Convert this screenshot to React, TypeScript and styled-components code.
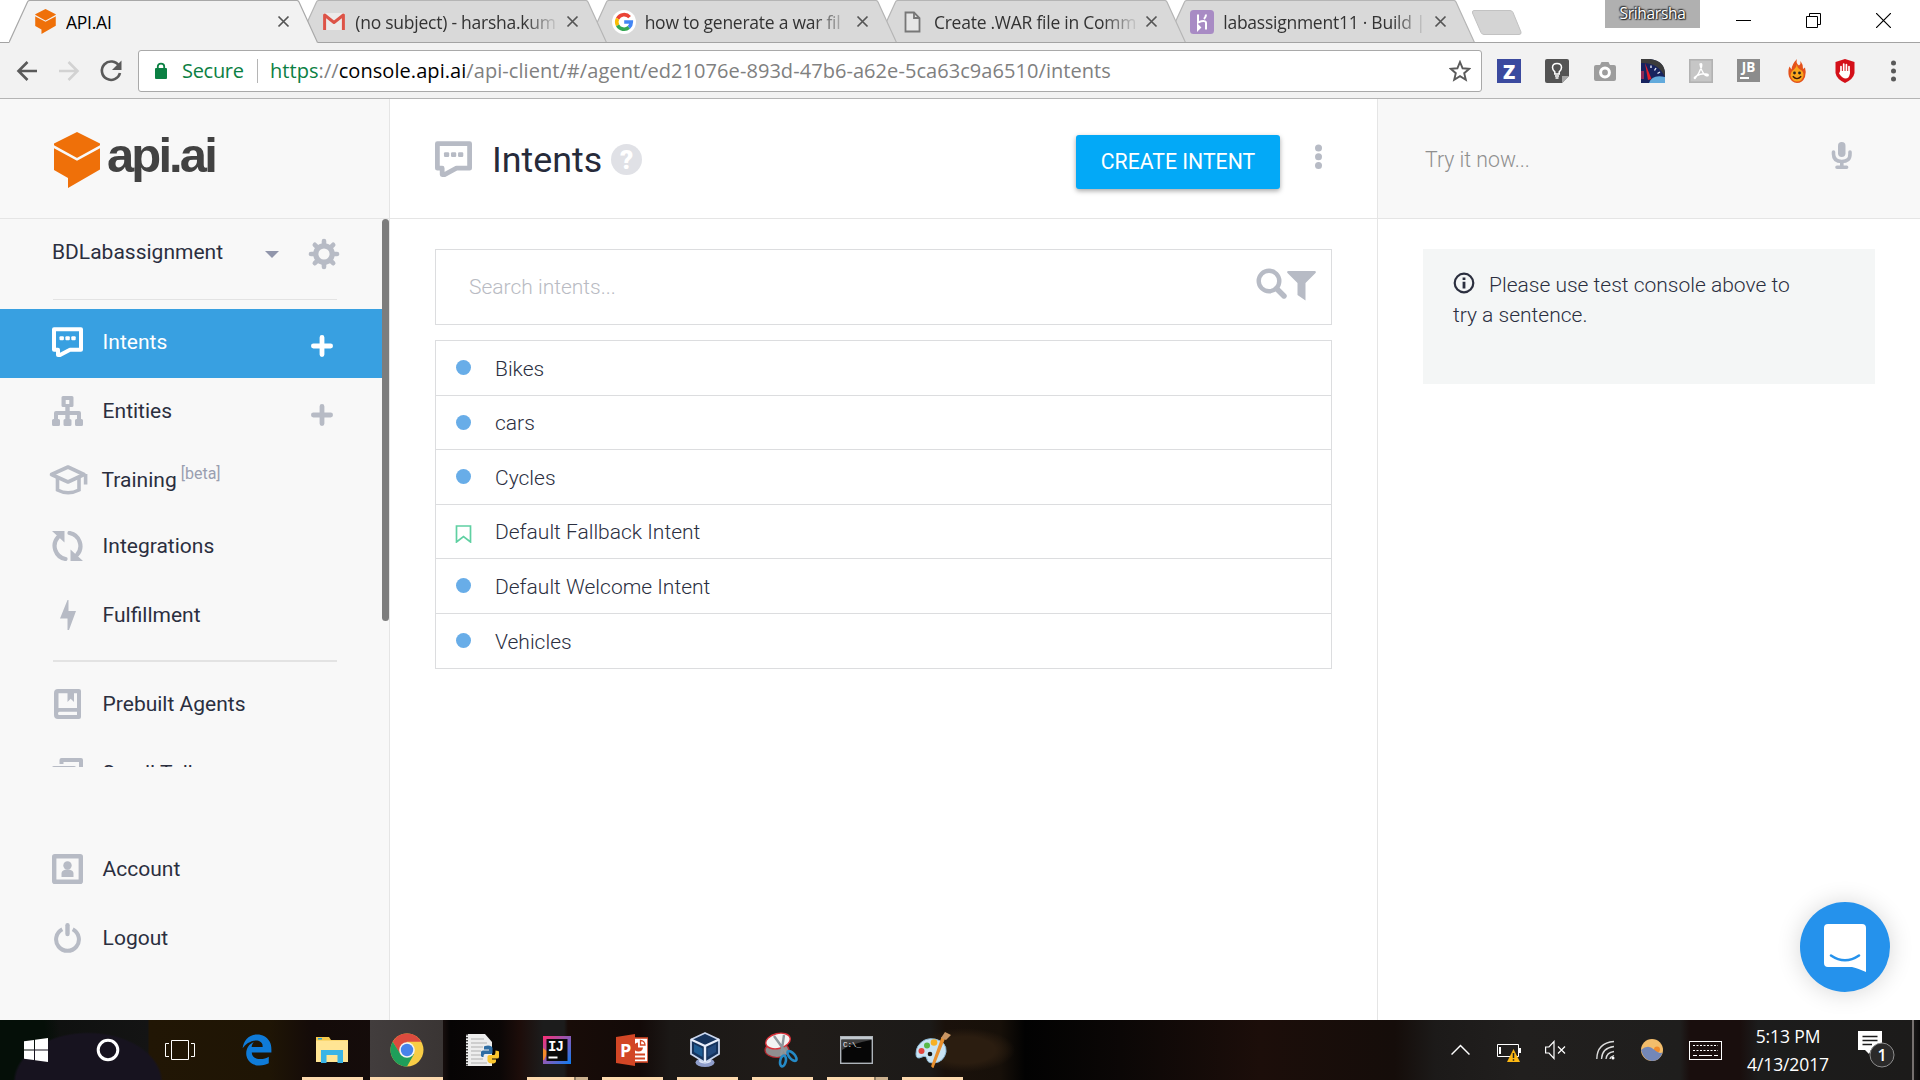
import React from 'react';
import styled, { createGlobalStyle, css } from 'styled-components';

const muted = '#b7bbc5';
const ink = '#2b2f3f';
const uiFont = '"Open Sans", "Noto Sans", sans-serif';
const appFont = 'Roboto, "Liberation Sans", sans-serif';

const GlobalStyle = createGlobalStyle`
  html, body { margin: 0; padding: 0; background: #fff; overflow: hidden; }
  *, *::before, *::after { box-sizing: border-box; }
  svg { display: block; flex: none; }
`;

const Screen = styled.div`
  width: 1920px;
  height: 1080px;
  display: flex;
  flex-direction: column;
  background: #fff;
  font-family: ${appFont};
  color: ${ink};
`;

/* ---------- browser chrome ---------- */

const TabStrip = styled.div`
  height: 43px;
  flex: none;
  display: flex;
  padding-left: 9px;
  background: #fff;
  box-shadow: inset 0 -1px 0 #a3a3a3;
`;

const TabBox = styled.div<{ $order: number }>`
  position: relative;
  z-index: ${(p) => p.$order};
  width: 309px;
  height: 43px;
  margin-right: -19.7px;
  padding: 0 28px 0 24px;
  display: flex;
  align-items: center;
  flex: none;
`;

const TabShape = styled.svg`
  position: absolute;
  inset: 0;
`;

const TabIcon = styled.div`
  position: relative;
  width: 24px;
  height: 26px;
  display: flex;
  align-items: center;
  justify-content: center;
  flex: none;
`;

const TabTitle = styled.div<{ $fade: boolean }>`
  position: relative;
  width: 207px;
  margin-left: 9px;
  overflow: hidden;
  white-space: nowrap;
  font: 400 17.5px/28px ${uiFont};
  letter-spacing: -0.25px;
  color: ${(p) => (p.$fade ? '#333' : '#000')};
  ${(p) =>
    p.$fade &&
    css`
      mask-image: linear-gradient(90deg, #000 82%, rgba(0, 0, 0, 0.15) 97%);
    `}
`;

const TabClose = styled.svg`
  position: relative;
  margin-left: 5px;
`;

const NewTab = styled.svg`
  margin: 9px 0 0 15px;
`;

const WindowControls = styled.div`
  margin-left: auto;
  display: flex;
  align-items: flex-start;
  padding-right: 2px;
`;

const ProfileBadge = styled.div`
  width: 95px;
  height: 28px;
  margin-right: 8px;
  background: #b0b0b0;
  color: #fff;
  font: 400 15.5px/27px ${uiFont};
  letter-spacing: -0.3px;
  text-align: center;
  text-shadow: 0 0 2px #222, 0 0 2px #222, 1px 1px 1px #333, -1px -1px 1px #444;
`;

const WindowButton = styled.div`
  width: 70px;
  height: 41px;
  display: flex;
  align-items: center;
  justify-content: center;
`;

const Toolbar = styled.div`
  height: 56px;
  flex: none;
  display: flex;
  align-items: center;
  background: #f2f2f2;
  border-bottom: 1px solid #b4b4b4;
`;

const NavButtons = styled.div`
  width: 138px;
  height: 41px;
  display: flex;
  align-items: center;
  padding-left: 15px;
  gap: 18px;
  flex: none;
`;

const Omnibox = styled.div`
  width: 1344px;
  height: 42px;
  display: flex;
  align-items: center;
  background: #fff;
  border: 1px solid #a9a9a9;
  border-radius: 3px;
  padding: 0 10px 0 15px;
  font: 400 20px/38px ${uiFont};
  white-space: nowrap;
  flex: none;
`;

const Secure = styled.span`
  width: 75px;
  margin-left: 14px;
  color: #0b8043;
  letter-spacing: -0.3px;
`;

const OmniDivider = styled.i`
  width: 1px;
  height: 24px;
  background: #b5b5b5;
  margin-right: 12px;
`;

const Url = styled.span`
  flex: 1;
  color: #808080;
  letter-spacing: 0.06px;
  b { font-weight: 400; color: #000; }
  em { font-style: normal; color: #0b8043; }
`;

const Extensions = styled.div`
  display: flex;
  align-items: center;
  padding-left: 15px;
`;

const ExtensionSlot = styled.div<{ $w?: number }>`
  width: ${(p) => p.$w ?? 48}px;
  display: flex;
  justify-content: flex-start;
`;

/* ---------- page ---------- */

const Page = styled.div`
  height: 921px;
  flex: none;
  display: flex;
`;

const Sidebar = styled.aside`
  width: 390px;
  flex: none;
  display: flex;
  flex-direction: column;
  background: #f8f8f8;
  border-right: 1px solid #e5e5e5;
`;

const Brand = styled.div`
  height: 120px;
  flex: none;
  display: flex;
  padding: 33px 0 0 54px;
  border-bottom: 1px solid #e5e5e5;
`;

const BrandName = styled.div`
  margin: -5px 0 0 7px;
  font: 700 49px/56px "Liberation Sans", Arial, sans-serif;
  letter-spacing: -2.9px;
  color: #424242;
`;

const ScrollArea = styled.div`
  height: 548px;
  flex: none;
  display: flex;
  overflow: hidden;
`;

const ScrollThumb = styled.div`
  width: 7px;
  height: 402px;
  border-radius: 4px;
  background: #7d7d7d;
`;

const Nav = styled.nav`
  width: 382px;
  flex: none;
`;

const AgentRow = styled.div`
  height: 80px;
  display: flex;
  padding-left: 52px;
`;

const AgentName = styled.div`
  width: 213px;
  font-size: 21px;
  line-height: 66px;
`;

const Caret = styled.svg`
  margin-top: 32px;
`;

const Gear = styled.svg`
  margin: 19px 0 0 29px;
`;

const Divider = styled.hr<{ $thick?: boolean }>`
  width: 284px;
  height: ${(p) => (p.$thick ? 2 : 1)}px;
  margin: ${(p) => (p.$thick ? '9px 0 9px 53px' : '0 0 9px 53px')};
  border: 0;
  background: #e3e3e3;
`;

const NavItem = styled.div<{ $active?: boolean; $h?: number }>`
  height: ${(p) => p.$h ?? 69}px;
  display: flex;
  padding-left: 47px;
  color: ${(p) => (p.$active ? '#fff' : ink)};
  background: ${(p) => (p.$active ? '#38a0e1' : 'transparent')};
`;

const NavIcon = styled.div<{ $active?: boolean }>`
  width: 41px;
  height: 30px;
  margin-top: 18px;
  display: flex;
  justify-content: center;
  color: ${(p) => (p.$active ? '#fff' : muted)};
`;

const NavLabel = styled.div<{ $shift?: number }>`
  width: 209px;
  margin-left: ${(p) => 14.6 + (p.$shift ?? 0)}px;
  margin-right: ${(p) => -0.6 - (p.$shift ?? 0)}px;
  font-size: 21px;
  line-height: 66px;
  white-space: nowrap;
`;

const Beta = styled.sup`
  font-size: 16px;
  line-height: 0;
  vertical-align: 8px;
  margin-left: 4px;
  color: #9a9fb0;
`;

const AddMark = styled.div<{ $active?: boolean }>`
  padding-top: 25.5px;
  color: ${(p) => (p.$active ? '#fff' : muted)};
`;

const AccountNav = styled.nav`
  padding-top: 69px;
`;

const Main = styled.main`
  width: 987px;
  flex: none;
`;

const MainHeader = styled.header`
  height: 120px;
  display: flex;
  align-items: flex-start;
  padding-left: 45px;
  border-bottom: 1px solid #e5e5e5;
`;

const HeaderIcon = styled.div`
  margin-top: 42px;
  color: ${muted};
`;

const Title = styled.h1`
  margin: 41px 9px 0 20px;
  font-size: 35.8px;
  font-weight: 400;
  line-height: 41px;
  color: #262a3a;
`;

const HelpBadge = styled.div`
  width: 31px;
  height: 31px;
  margin-top: 45px;
  border-radius: 50%;
  background: #e0e1e6;
  color: #fff;
  font-weight: 900;
  font-size: 26px;
  line-height: 32px;
  text-align: center;
`;

const CreateButton = styled.button`
  width: 204px;
  height: 54px;
  margin: 36px 34px 0 auto;
  padding: 0;
  border: 0;
  border-radius: 3px;
  background: #03a9f7;
  box-shadow: 0 2px 5px rgba(0, 0, 0, 0.35);
  color: #fff;
  font: 400 21.25px/54px ${appFont};
`;

const HeaderMenu = styled.svg`
  margin: 45px 54px 0 0;
`;

const MainBody = styled.div`
  padding: 30px 45px 0;
`;

const SearchBox = styled.div`
  height: 76px;
  display: flex;
  align-items: flex-start;
  border: 1px solid #dcdddf;
  padding: 0 15px 0 33px;
  color: #b9bbc3;
`;

const Placeholder = styled.span`
  flex: 1;
  font-size: 21px;
  font-weight: 300;
  line-height: 74px;
`;

const SearchIcon = styled.svg`
  margin-top: 17px;
`;

const FilterIcon = styled.svg`
  margin-top: 21px;
`;

const IntentList = styled.ul`
  list-style: none;
  margin: 15px 0 0;
  padding: 0;
  border: 1px solid #dcdddf;
`;

const IntentRow = styled.li`
  height: 54.5px;
  display: flex;
  align-items: center;
  padding-left: 19px;
  font-size: 21px;
  font-weight: 300;
  &:not(:last-child) { border-bottom: 1px solid #dcdddf; }
`;

const IntentMark = styled.div`
  width: 17px;
  margin-right: 23px;
  display: flex;
  justify-content: center;
`;

const IntentName = styled.span`
  padding-top: 1.5px;
  line-height: 30px;
`;

const Dot = styled.i`
  width: 15px;
  height: 15px;
  border-radius: 50%;
  background: #68ade8;
`;

const Console = styled.aside`
  position: relative;
  width: 543px;
  flex: none;
  border-left: 1px solid #e5e5e5;
`;

const ConsoleHeader = styled.div`
  height: 120px;
  display: flex;
  align-items: flex-start;
  justify-content: space-between;
  padding: 0 67px 0 47px;
  background: #f8f8f8;
  border-bottom: 1px solid #e5e5e5;
  font-size: 21.25px;
  font-weight: 300;
  line-height: 122px;
  color: #8f8f8f;
`;

const Mic = styled.svg`
  margin-top: 43px;
`;

const Hint = styled.div`
  width: 452px;
  height: 135px;
  margin: 30px 0 0 45px;
  padding: 21px 70px 0 30px;
  background: #f4f6f6;
  font-size: 21px;
  font-weight: 300;
  line-height: 30.4px;
`;

const HintIcon = styled.svg`
  display: inline-block;
  vertical-align: -2px;
  margin-right: 14px;
`;

const Messenger = styled.div`
  position: absolute;
  left: 422px;
  top: 803px;
  width: 90px;
  height: 90px;
  border-radius: 50%;
  background: #2592ec;
  box-shadow: 0 1px 24px rgba(0, 0, 0, 0.16);
`;

/* ---------- taskbar ---------- */

const Taskbar = styled.div`
  height: 60px;
  flex: none;
  display: flex;
  background:
    radial-gradient(ellipse 75px 50px at 88px 62px, #17131f 0 96%, transparent 100%),
    radial-gradient(ellipse 60px 90px at 0 20px, #050f08 0 75%, transparent 100%),
    radial-gradient(ellipse 50px 22px at 965px 30px, #2b1d10 0 60%, transparent 100%),
    linear-gradient(90deg, #0c0f0d 0, #141414 148px, #211605 149px, #1f1505 270px, #140b09 312px,
      #150d0c 444px, #060404 450px, #0b0706 500px, #1d0d0a 520px, #1c1c1c 543px, #1c1c1c 564px,
      #180c08 568px, #130a08 640px, #1b1816 670px, #201c19 800px, #1c1a18 930px, #1a110b 945px,
      #171009 1000px, #020202 1025px, #0b0706 1120px, #1c0e0a 1260px, #150d0a 1395px, #1c1a19 1435px,
      #211f1e 1520px, #1f1e1d 1680px, #190e0d 1690px, #190e0d 1740px, #1c1c1c 1758px, #1c1b1a 1912px,
      #0d0c0c 1920px);
`;

const Task = styled.div<{ $w?: number; $active?: boolean }>`
  width: ${(p) => p.$w ?? 75}px;
  height: 60px;
  display: flex;
  flex-direction: column;
  align-items: center;
  background: ${(p) => (p.$active ? 'linear-gradient(90deg, #423d3d, #3a3534)' : 'transparent')};
  flex: none;
`;

const TaskArt = styled.div<{ $nudge?: number }>`
  height: 57px;
  padding: 3px ${(p) => p.$nudge ?? 0}px 0 0;
  display: flex;
  align-items: center;
`;

const TaskLine = styled.div<{ $w: number; $stacked?: boolean }>`
  width: ${(p) => p.$w}px;
  height: 3px;
  background: ${(p) =>
    p.$stacked ? 'linear-gradient(90deg, #fcd9ae 47px, #8e7c65 47px 49px, #cbb08e 49px)' : '#fcd9ae'};
`;

const Tray = styled.div`
  margin-left: auto;
  display: flex;
  align-items: center;
`;

const TraySlot = styled.div<{ $w: number }>`
  width: ${(p) => p.$w}px;
  flex: none;
`;

const Clock = styled.div`
  width: 100px;
  text-align: center;
  color: #fff;
  font: 400 17.500px/28px ${uiFont};
  letter-spacing: -0.1px;
`;

const ShowDesktop = styled.div`
  width: 8px;
  height: 60px;
  border-left: 2px solid #75706e;
`;

/* ---------- drawings ---------- */

const Cube = ({ w, h, gap }: { w: number; h: number; gap: string }) => (
  <svg width={w} height={h} viewBox="0 0 46 56">
    <path d="M23 0 46 11.5V37.500L14 56V46L0 38V11.5Z" fill="#ef7009" />
    <path d="M-1 14.300 23 27.300 47 14.300" fill="none" stroke={gap} strokeWidth="2.6" />
  </svg>
);

const SpeechIcon = ({ w, h }: { w: number; h: number }) => (
  <svg width={w} height={h} viewBox="0 0 31 30">
    <path
      d="M2 2.200H29V22.700H18L8 28H6V22.700H2Z"
      fill="none"
      stroke="currentColor"
      strokeWidth="4"
      strokeLinejoin="round"
    />
    <g fill="currentColor">
      <rect x="7.500" y="9.300" width="4.400" height="4" rx="1" />
      <rect x="13.400" y="9.300" width="4.400" height="4" rx="1" />
      <rect x="19.300" y="9.300" width="4.400" height="4" rx="1" />
    </g>
  </svg>
);

const EntitiesIcon = () => (
  <svg width="31" height="30" viewBox="0 0 31 30" fill="currentColor">
    <path
      fillRule="evenodd"
      d="M11 0h9q1.500 0 1.500 1.500v8q0 1.500-1.500 1.500h-2.300v4H27q2 0 2 2v6h.5q1.500 0 1.500 1.500v4q0 1.500-1.500 1.500h-5q-1.500 0-1.500-1.500v-4q0-1.500 1.500-1.500h.5v-4H17.700v4h.3q1.500 0 1.500 1.500v4q0 1.500-1.500 1.500h-5q-1.500 0-1.500-1.500v-4q0-1.500 1.500-1.500h.3v-4H6v4h.5q1.500 0 1.500 1.500v4q0 1.500-1.500 1.500h-5q-1.500 0-1.500-1.500v-4q0-1.500 1.500-1.500H2v-6q0-2 2-2h9.300v-4H11q-1.500 0-1.500-1.500v-8Q9.500 0 11 0ZM13.700 4v4h3.600V4Z"
    />
  </svg>
);

const TrainingIcon = () => (
  <svg width="40" height="30" viewBox="0 0 40 30" fill="none" stroke="currentColor" strokeWidth="3.600">
    <path d="M3.500 9.500 20 2 36 9.500 20 17Z" strokeLinejoin="round" />
    <path d="M9.500 13v12Q20 30.500 31 25V13" />
    <path d="M37.600 9v10.500" />
  </svg>
);

const IntegrationsIcon = () => (
  <svg width="31" height="30" viewBox="0 0 31 30">
    <g fill="none" stroke="currentColor" strokeWidth="4.200" strokeLinecap="round">
      <path d="M13.500 28A13.200 13.200 0 0 1 6 6.200" />
      <path d="M17.500 2A13.200 13.200 0 0 1 25 23.800" />
    </g>
    <path d="M0 0H12.500V11.500Z M31 30H18.500V18.500Z" fill="currentColor" />
  </svg>
);

const BoltIcon = () => (
  <svg width="16" height="30" viewBox="0 0 16 30" fill="currentColor">
    <path d="M7.500 0H8.500V11H16L9 30H7.500V18.500H0Z" />
  </svg>
);

const BookIcon = () => (
  <svg width="27" height="30" viewBox="0 0 27 30">
    <path
      fill="currentColor"
      fillRule="evenodd"
      d="M4 0H25Q27 0 27 2V28Q27 30 25 30H4Q0 30 0 26V4Q0 0 4 0ZM4.500 4.300V19H23V4.300H20V13L16.700 9.800 13.500 13V4.300ZM5.500 22.800Q4 22.800 4 24.500T5.500 26H23V22.800Z"
    />
  </svg>
);

const TalkIcon = () => (
  <svg width="31" height="30" viewBox="0 0 31 30" fill="none" stroke="currentColor" strokeWidth="4">
    <path d="M9.500 6V2H29V17H25" strokeLinejoin="round" />
    <path d="M2 10H22V24H10L2 28Z" strokeLinejoin="round" />
  </svg>
);

const AccountIcon = () => (
  <svg width="31" height="30" viewBox="0 0 31 30">
    <rect x="2.200" y="2.200" width="26.600" height="25.600" rx=".6" fill="none" stroke="currentColor" strokeWidth="4.400" />
    <circle cx="15.500" cy="11.500" r="4.200" fill="currentColor" />
    <path d="M9.500 23V19Q10 15.500 15.500 15.500T21.500 19V23Z" fill="currentColor" />
  </svg>
);

const PowerIcon = () => (
  <svg width="27" height="30" viewBox="0 0 27 30" fill="none" stroke="currentColor" strokeWidth="4">
    <path d="M8.300 6.300A11.400 11.400 0 1 0 18.700 6.300" />
    <path d="M13.500 2.200V11" strokeWidth="4.400" strokeLinecap="round" />
  </svg>
);

const PlusIcon = () => (
  <svg width="22" height="22" viewBox="0 0 22 22" stroke="currentColor" strokeWidth="4.800" strokeLinecap="round">
    <path d="M2.400 11H19.600M11 2.400V19.600" />
  </svg>
);

const GearIcon = () => (
  <Gear width="32" height="32" viewBox="-16 -16 32 32">
    <g stroke={muted} strokeWidth="4.600" strokeLinecap="round">
      {[0, 45, 90, 135, 180, 225, 270, 315].map((a) => (
        <path key={a} d="M0-9V-13" transform={`rotate(${a})`} />
      ))}
    </g>
    <circle r="8.200" fill="none" stroke={muted} strokeWidth="5.200" />
  </Gear>
);

const tabPath = 'M0 42.500 18.500 2Q19.300.5 21 .5H287.500Q289.200.5 290 2L308.500 42.500';

const Tab = ({
  title,
  icon,
  order,
  active,
}: {
  title: string;
  icon: React.ReactNode;
  order: number;
  active?: boolean;
}) => (
  <TabBox $order={order}>
    <TabShape width="309" height="43" viewBox="0 0 309 43">
      <path d={active ? tabPath + 'V43H0Z' : tabPath + 'Z'} fill={active ? '#f2f2f2' : '#d9d9d9'} />
      <path d={tabPath} fill="none" stroke={active ? '#a8a8a8' : '#b5b5b5'} strokeWidth="1.200" />
      {!active && <path d="M0 42.500H309" stroke="#a3a3a3" />}
    </TabShape>
    <TabIcon>{icon}</TabIcon>
    <TabTitle $fade={!active}>{title}</TabTitle>
    <TabClose width="13" height="13" viewBox="0 0 13 13" stroke="#555" strokeWidth="1.700">
      <path d="M1.500 1.500 11.500 11.500M11.500 1.500 1.500 11.500" />
    </TabClose>
  </TabBox>
);

const GmailIcon = () => (
  <svg width="22" height="17" viewBox="0 0 22 17">
    <rect width="22" height="17" rx="1.500" fill="#eceaea" />
    <path d="M1.600 17V2L11 9.500 20.400 2V17" fill="none" stroke="#dd5347" strokeWidth="3" strokeLinejoin="round" />
  </svg>
);

const GoogleIcon = () => (
  <svg width="24" height="24" viewBox="0 0 24 24">
    <circle cx="12" cy="12" r="12" fill="#fff" />
    <g fill="none" strokeWidth="3.600">
      <path d="M17.600 7.100A7.300 7.300 0 0 0 5.600 8.600" stroke="#ea4335" />
      <path d="M5.600 8.600A7.300 7.300 0 0 0 5.600 15.400" stroke="#fbbc05" />
      <path d="M5.600 15.400A7.300 7.300 0 0 0 16.900 17.400" stroke="#34a853" />
      <path d="M16.900 17.400A7.300 7.300 0 0 0 19.300 12H12.200" stroke="#4285f4" />
    </g>
  </svg>
);

const FileIcon = () => (
  <svg width="17" height="22" viewBox="0 0 17 22" fill="#e6e6e6" stroke="#777" strokeWidth="1.800">
    <path d="M1.500 1.500H10L15.500 7V20.500H1.500Z" />
    <path d="M10 1.500V7H15.500" fill="none" />
  </svg>
);

const HerokuIcon = () => (
  <svg width="24" height="24" viewBox="0 0 24 24">
    <rect width="24" height="24" rx="3.500" fill="#a88bc4" />
    <path d="M8 4.500V12.500Q16 9.500 16 13V19.500M16 4.500Q16 7 14 9M8 15.500V19.500L10 17.500Z" fill="none" stroke="#fff" strokeWidth="2" />
  </svg>
);

const extensions: React.ReactNode[] = [
  <svg width="24" height="24" viewBox="0 0 24 24">
    <rect width="24" height="24" fill="#3b4a9f" />
    <text x="12" y="19.500" textAnchor="middle" fontFamily="Open Sans, sans-serif" fontWeight="800" fontSize="20" fill="#fff">Z</text>
  </svg>,
  <svg width="24" height="24" viewBox="0 0 24 24">
    <path d="M2 0H22Q24 0 24 2V17L17 24H2Q0 24 0 22V2Q0 0 2 0Z" fill="#545454" />
    <path d="M24 17H17V24Z" fill="#a5a5a5" />
    <path d="M9.800 15V12.800Q7.500 11 7.500 8.500 7.500 4.500 12 4.500T16.500 8.500Q16.500 11 14.200 12.800V15Z" fill="none" stroke="#fff" strokeWidth="1.500" />
    <path d="M10 17H14M10.500 19H13.500" stroke="#fff" strokeWidth="1.500" />
  </svg>,
  <svg width="24" height="24" viewBox="0 0 24 24">
    <path d="M3 6H7L8.500 3H15.500L17 6H21Q23 6 23 8V20Q23 22 21 22H3Q1 22 1 20V8Q1 6 3 6Z" fill="#9d9d9d" />
    <circle cx="12" cy="13.500" r="4.400" fill="#9d9d9d" stroke="#fff" strokeWidth="3" />
  </svg>,
  <svg width="24" height="24" viewBox="0 0 24 24">
    <path d="M0 0H9Q24 2 24 16V24H0Z" fill="#17235f" />
    <path d="M0 0H9Q24 2 24 15V18Q17 3 0 4Z" fill="#3c3c3c" />
    <path d="M8 24Q11 15 24 18V24Z" fill="#62aadc" />
    <path d="M10 6.500V9M15 9 13.500 11.500M19 13 16.500 14.500" stroke="#dfe6f5" strokeWidth="1.400" />
    <path d="M4 4 10.500 20 7 21Z" fill="#e3202b" />
    <path d="M0 12H3V20H0Z" fill="#8c2a58" />
  </svg>,
  <svg width="24" height="24" viewBox="0 0 24 24">
    <rect x=".8" y=".8" width="22.400" height="22.400" fill="#c6c6c6" stroke="#b2b2b2" strokeWidth="1.600" />
    <path d="M11 5Q13.500 3.500 12.500 8 10.500 14 6 19.500 4 19 8 16.500 14 13.500 19 15.500 20 18 16 16 12 12 11 5Z" fill="none" stroke="#fff" strokeWidth="1.400" />
  </svg>,
  <svg width="23" height="23" viewBox="0 0 23 23">
    <rect width="23" height="23" fill="#8c8c8c" />
    <text x="11.500" y="13" textAnchor="middle" fontFamily="Open Sans, sans-serif" fontWeight="700" fontSize="13.500" fill="#fff">JB</text>
    <rect x="3" y="18" width="9" height="2" fill="#fff" />
  </svg>,
  <svg width="24" height="24" viewBox="0 0 24 24">
    <path d="M12 0Q10.500 4 14 6.500 16 5 15.500 2 18.500 6 18 10L20 8.500Q21.500 13 20 18 17.500 24 12 24T4 17.500Q2.500 12 4.500 7.500L6.500 10.500Q7 5 12 0Z" fill="#e4521b" />
    <path d="M12 5Q12 9 15 10.500 19 12 18.500 17 17 22.500 12 22.500T5.500 16.500Q6 12 9 10.500 11.500 8.500 12 5Z" fill="#f9a61e" />
    <circle cx="9.500" cy="14" r="1.400" fill="#222" />
    <circle cx="14.500" cy="14" r="1.400" fill="#222" />
    <path d="M7.800 17.300Q12 22 16.200 17.300" fill="none" stroke="#3a1608" strokeWidth="1.400" />
  </svg>,
  <svg width="24" height="24" viewBox="0 0 24 24">
    <path d="M12 0 21.500 3V14Q20.500 20 12 24 3.500 20 2.500 14V3Z" fill="#d41019" />
    <path d="M8 13V7.500M10.700 12V5M13.400 12V5.500M16 14V7.500" stroke="#fff" strokeWidth="1.700" strokeLinecap="round" />
    <path d="M7.200 12H16.800V15Q16 19.500 12.500 19.500 9.500 19.500 6 14.500Z" fill="#fff" />
  </svg>,
];

const tasks: { art: React.ReactNode; line?: boolean; stacked?: boolean; active?: boolean; nudge?: number }[] = [
  {
    nudge: 2,
    art: (
      <svg width="32" height="32" viewBox="12 0 488 512">
        <path
          fill="#0f7bd8"
          d="M486.286 243.671c0-44.032-7.754-84.465-28.801-122.405C416.498 47.879 343.912 8.001 258.893 8.001 118.962 7.724 40.617 113.214 26.056 227.679c42.429-61.312 117.073-121.376 220.375-124.966 0 0 109.666 0 99.419 104.957H169.997c6.369-37.386 18.554-58.986 34.339-78.926-75.049 34.900-121.850 96.096-120.742 188.315.83 71.448 50.124 144.836 120.743 171.976 83.357 31.843 192.776 7.200 240.132-21.324V363.307c-80.864 56.494-270.871 60.924-272.255-67.572h314.073z"
        />
      </svg>
    ),
  },
  {
    line: true,
    nudge: 2,
    art: (
      <svg width="32" height="28" viewBox="0 0 32 28">
        <path d="M0 1H13L15 4H32V26H0Z" fill="#f5c84c" />
        <rect y="4.500" width="32" height="21.500" fill="#ffe594" />
        <rect x="2" y="2" width="4" height="1.500" fill="#2a9fd6" />
        <path d="M5 14H27V27H21.500V19H10.500V27H5Z" fill="#39b4e6" />
      </svg>
    ),
  },
  {
    line: true,
    active: true,
    art: (
      <svg width="34" height="34" viewBox="-17 -17 34 34">
        <circle r="16.500" fill="#f8cd46" />
        <path d="M-14.300-8.250A16.500 16.500 0 0 1 14.300-8.250H0L-7 4Z" fill="#dc4b3e" />
        <path d="M-14.300-8.250A16.500 16.500 0 0 0 0 16.500L7.100 4.100-6 5Z" fill="#1f9e5a" />
        <circle r="7.800" fill="#f3f3f3" />
        <circle r="6.200" fill="#4683ea" />
      </svg>
    ),
  },
  {
    art: (
      <svg width="34" height="34" viewBox="0 0 34 34">
        <path d="M1 1H20L27 9V33H1Z" fill="#ededed" />
        <path d="M2 1V33" stroke="#444" strokeWidth="2" strokeDasharray="1.500 1.500" />
        <path d="M6 6H19M6 10H22M6 14H18M6 18H16M6 22H17M6 26H18M6 30H22" stroke="#c4c4c4" strokeWidth="1.300" />
        <path d="M16 23V19Q16 17.500 18 17.500H24V16.500H19V14Q19 12.500 23 12.500T27.500 15V19.500Q27.500 21 25.500 21H20Q18.500 21 18.500 24H17Z" fill="#2f6da3" />
        <path d="M34 19V24Q34 25.500 32 25.500H27V26.500H31V28.500Q30.500 30.500 27 30.500T22.500 28V23.500Q22.500 22 24.500 22H29Q30.500 22 30.500 17.500 34 17.500 34 19Z" fill="#fbc62f" />
      </svg>
    ),
  },
  {
    line: true,
    stacked: true,
    nudge: 2,
    art: (
      <svg width="28" height="28" viewBox="0 0 28 28">
        <defs>
          <linearGradient id="ij" x1="0" y1="0" x2="1" y2="1">
            <stop offset="0" stopColor="#fc2d72" />
            <stop offset=".5" stopColor="#8a5bb8" />
            <stop offset="1" stopColor="#0a7df2" />
          </linearGradient>
        </defs>
        <rect width="28" height="28" fill="url(#ij)" />
        <path d="M0 12 5 16 1 24H0Z" fill="#f58a2b" />
        <rect x="3.500" y="3" width="21" height="22" fill="#0a0a0a" />
        <text x="5" y="15" fontFamily="Liberation Mono, monospace" fontWeight="700" fontSize="14" letterSpacing="-1" fill="#fff">IJ</text>
        <rect x="5.500" y="20.500" width="9" height="2" fill="#fff" />
      </svg>
    ),
  },
  {
    line: true,
    nudge: 2,
    art: (
      <svg width="32" height="32" viewBox="0 0 32 32">
        <rect x="16" y="4" width="16" height="24" fill="#fff" stroke="#d24625" strokeWidth="1.600" />
        <path d="M22 8.500A4.500 4.500 0 1 0 27 13.500H22Z" fill="#d24625" />
        <path d="M24.500 6.500A4.500 4.500 0 0 1 29 11H24.500Z" fill="none" stroke="#d24625" strokeWidth="1.300" />
        <path d="M19 20.500H29M19 24.500H29" stroke="#d24625" strokeWidth="2" />
        <path d="M0 3 19 0V32L0 29Z" fill="#d24625" />
        <text x="4" y="22.500" fontFamily="Open Sans, sans-serif" fontWeight="700" fontSize="18" fill="#fff">P</text>
      </svg>
    ),
  },
  {
    line: true,
    nudge: 6,
    art: (
      <svg width="30" height="36" viewBox="0 0 30 36">
        <ellipse cx="15" cy="30.500" rx="9.500" ry="4.500" fill="#8f9ecb" />
        <ellipse cx="15" cy="29" rx="6" ry="2.500" fill="#dfe5f6" />
        <path d="M15 1 29 7.500V22L15 30.500 1 22V7.500Z" fill="#16335c" stroke="#c9d6ee" strokeWidth="1.800" strokeLinejoin="round" />
        <path d="M1 7.500 15 14 29 7.500M15 14V30" fill="none" stroke="#e8eefb" strokeWidth="2.400" />
        <path d="M4 12 12.500 16.500V25L4 20Z" fill="#1f5c93" />
        <path d="M26 12 17.500 16.500V25L26 20Z" fill="#244a7d" />
      </svg>
    ),
  },
  {
    line: true,
    nudge: 3,
    art: (
      <svg width="34" height="36" viewBox="0 0 34 36">
        <ellipse cx="13" cy="18" rx="12" ry="7.500" fill="#8f8f8f" stroke="#b4252c" strokeWidth="1.200" />
        <ellipse cx="14" cy="9" rx="12.500" ry="7.500" transform="rotate(-14 14 9)" fill="#f3f3f3" stroke="#d8313a" strokeWidth="1.400" />
        <path d="M10 4 23 22M20 3 17 24" stroke="#8f979d" strokeWidth="2.400" />
        <ellipse cx="19" cy="29" rx="2.800" ry="5.500" transform="rotate(12 19 29)" fill="none" stroke="#258ac6" strokeWidth="2.600" />
        <ellipse cx="28" cy="24" rx="2.800" ry="6" transform="rotate(-42 28 24)" fill="none" stroke="#258ac6" strokeWidth="2.600" />
      </svg>
    ),
  },
  {
    line: true,
    stacked: true,
    nudge: 2,
    art: (
      <svg width="33" height="28" viewBox="0 0 33 28">
        <rect x=".7" y=".7" width="31.600" height="26.600" fill="#060606" stroke="#aeb4ba" strokeWidth="1.400" />
        <rect x="1" y="1" width="31" height="2.500" fill="#c2c9cf" />
        <path d="M2 4H31Q10 8 2 14Z" fill="#3d3d3d" />
        <text x="3" y="10.500" fontFamily="Liberation Mono, monospace" fontSize="7.500" fill="#eee">C:\_</text>
      </svg>
    ),
  },
  {
    line: true,
    art: (
      <svg width="36" height="36" viewBox="0 0 36 36">
        <path d="M3 14Q9 5 20 7 32 10 31 20 29 30 19 31 12 31 12 27 11 23 7 25 1 28 1 22 1 17 3 14Z" fill="#c9e4f4" stroke="#8fbcd9" />
        <circle cx="15" cy="22" r="2.300" fill="#171514" />
        <circle cx="6.500" cy="19" r="3" fill="#e2463e" />
        <circle cx="12" cy="13.500" r="3" fill="#57b947" />
        <circle cx="19" cy="10.500" r="3.300" fill="#f7b125" />
        <path d="M29 7 18 35 17 34 27 6Z" fill="#e8902f" stroke="#e8902f" strokeWidth="1.600" />
        <path d="M26 6 30 0 36 3 31 8Z" fill="#c99563" />
      </svg>
    ),
  },
];

const intents = ['Bikes', 'cars', 'Cycles', 'Default Fallback Intent', 'Default Welcome Intent', 'Vehicles'];

const menu: { label: string; icon: React.ReactNode; active?: boolean; add?: boolean; beta?: boolean; h?: number }[] = [
  { label: 'Intents', icon: <SpeechIcon w={31} h={30} />, active: true, add: true },
  { label: 'Entities', icon: <EntitiesIcon />, add: true },
  { label: 'Training', icon: <TrainingIcon />, beta: true, h: 66 },
  { label: 'Integrations', icon: <IntegrationsIcon /> },
  { label: 'Fulfillment', icon: <BoltIcon /> },
];

export default function App() {
  return (
    <Screen>
      <GlobalStyle />
      <TabStrip>
        <Tab order={5} active title="API.AI" icon={<Cube w={21} h={25} gap="#f2f2f2" />} />
        <Tab order={4} title="(no subject) - harsha.kum" icon={<GmailIcon />} />
        <Tab order={3} title="how to generate a war fil" icon={<GoogleIcon />} />
        <Tab order={2} title="Create .WAR file in Comm" icon={<FileIcon />} />
        <Tab order={1} title="labassignment11 · Build |" icon={<HerokuIcon />} />
        <NewTab width="52" height="27" viewBox="0 0 52 27">
          <path d="M3 1.500H39Q41 1.500 42 3.500L50 23Q50.500 25.500 48 25.500H13Q11 25.500 10 23.500L1.500 4Q1 1.500 3 1.500Z" fill="#d4d4d4" stroke="#c2c2c2" />
        </NewTab>
        <WindowControls>
          <ProfileBadge>Sriharsha</ProfileBadge>
          <WindowButton>
            <svg width="15" height="15" viewBox="0 0 15 15"><path d="M0 7.500H15" stroke="#000" /></svg>
          </WindowButton>
          <WindowButton>
            <svg width="15" height="15" viewBox="0 0 15 15" fill="none" stroke="#000">
              <path d="M.5 3.500H11.500V14.500H.5ZM3.500 3.500V.5H14.500V11.500H11.500" />
            </svg>
          </WindowButton>
          <WindowButton>
            <svg width="15" height="15" viewBox="0 0 15 15" stroke="#000" strokeWidth="1.200"><path d="M0 0 15 15M15 0 0 15" /></svg>
          </WindowButton>
        </WindowControls>
      </TabStrip>

      <Toolbar>
        <NavButtons>
          <svg width="24" height="24" viewBox="0 0 24 24" fill="none" stroke="#5a5a5a" strokeWidth="2.600">
            <path d="M22 12H4M12.500 3 3.500 12 12.500 21" />
          </svg>
          <svg width="24" height="24" viewBox="0 0 24 24" fill="none" stroke="#d2d2d2" strokeWidth="2.600">
            <path d="M2 12H20M11.500 3 20.500 12 11.500 21" />
          </svg>
          <svg width="24" height="24" viewBox="0 0 24 24">
            <path d="M20 7A9.200 9.200 0 1 0 21 14" fill="none" stroke="#5a5a5a" strokeWidth="2.600" />
            <path d="M22.500 1.500V11H13Z" fill="#5a5a5a" />
          </svg>
        </NavButtons>
        <Omnibox>
          <svg width="14" height="18" viewBox="0 0 14 18">
            <rect x="1" y="6" width="12" height="11" rx="1" fill="#0b8043" />
            <path d="M3.800 7V4.500Q3.800 1.700 7 1.700T10.200 4.500V7" fill="none" stroke="#0b8043" strokeWidth="1.800" />
          </svg>
          <Secure>Secure</Secure>
          <OmniDivider />
          <Url>
            <em>https</em>://<b>console.api.ai</b>/api-client/#/agent/ed21076e-893d-47b6-a62e-5ca63c9a6510/intents
          </Url>
          <svg width="22" height="22" viewBox="0 0 22 22">
            <path d="M11 2 13.600 8.300 20.300 8.800 15.200 13.200 16.800 19.800 11 16.200 5.200 19.800 6.800 13.200 1.700 8.800 8.400 8.300Z" fill="none" stroke="#5a5a5a" strokeWidth="1.900" />
          </svg>
        </Omnibox>
        <Extensions>
          {extensions.map((art, i) => (
            <ExtensionSlot key={i} $w={i === 7 ? 54 : 48}>{art}</ExtensionSlot>
          ))}
          <svg width="12" height="24" viewBox="0 0 12 24" fill="#5a5a5a">
            <circle cx="6.500" cy="4" r="2.500" />
            <circle cx="6.500" cy="12" r="2.500" />
            <circle cx="6.500" cy="20" r="2.500" />
          </svg>
        </Extensions>
      </Toolbar>

      <Page>
        <Sidebar>
          <Brand>
            <Cube w={46} h={56} gap="#f8f8f8" />
            <BrandName>api.ai</BrandName>
          </Brand>
          <ScrollArea>
            <Nav>
              <AgentRow>
                <AgentName>BDLabassignment</AgentName>
                <Caret width="14" height="7" viewBox="0 0 14 7"><path d="M0 0H14L7 7Z" fill="#9196ab" /></Caret>
                <GearIcon />
              </AgentRow>
              <Divider />
              {menu.map((m) => (
                <NavItem key={m.label} $active={m.active} $h={m.h}>
                  <NavIcon $active={m.active}>{m.icon}</NavIcon>
                  <NavLabel $shift={m.beta ? -1 : 0}>
                    {m.label}
                    {m.beta && <Beta>[beta]</Beta>}
                  </NavLabel>
                  {m.add && <AddMark $active={m.active}><PlusIcon /></AddMark>}
                </NavItem>
              ))}
              <Divider $thick />
              <NavItem>
                <NavIcon><BookIcon /></NavIcon>
                <NavLabel>Prebuilt Agents</NavLabel>
              </NavItem>
              <NavItem>
                <NavIcon><TalkIcon /></NavIcon>
                <NavLabel>Small Talk</NavLabel>
              </NavItem>
            </Nav>
            <ScrollThumb />
          </ScrollArea>
          <AccountNav>
            <NavItem>
              <NavIcon><AccountIcon /></NavIcon>
              <NavLabel>Account</NavLabel>
            </NavItem>
            <NavItem>
              <NavIcon><PowerIcon /></NavIcon>
              <NavLabel>Logout</NavLabel>
            </NavItem>
          </AccountNav>
        </Sidebar>

        <Main>
          <MainHeader>
            <HeaderIcon><SpeechIcon w={37} h={36} /></HeaderIcon>
            <Title>Intents</Title>
            <HelpBadge>?</HelpBadge>
            <CreateButton>CREATE INTENT</CreateButton>
            <HeaderMenu width="9" height="26" viewBox="0 0 9 26" fill={muted}>
              <circle cx="4.500" cy="4" r="3.500" />
              <circle cx="4.500" cy="12.700" r="3.500" />
              <circle cx="4.500" cy="21.400" r="3.500" />
            </HeaderMenu>
          </MainHeader>
          <MainBody>
            <SearchBox>
              <Placeholder>Search intents...</Placeholder>
              <SearchIcon width="31" height="32" viewBox="0 0 31 32" fill="none" stroke={muted}>
                <circle cx="13" cy="14" r="10.300" strokeWidth="4.400" />
                <path d="M20.500 21.500 28 29" strokeWidth="5.400" strokeLinecap="round" />
              </SearchIcon>
              <FilterIcon width="29" height="30" viewBox="0 0 29 30">
                <path d="M1 0H28Q29.500.5 28.500 2L18.500 12V29.500L10.500 24V12L.5 2Q-.5.5 1 0Z" fill={muted} />
              </FilterIcon>
            </SearchBox>
            <IntentList>
              {intents.map((name) => (
                <IntentRow key={name}>
                  <IntentMark>
                    {name.includes('Fallback') ? (
                      <svg width="17" height="24" viewBox="0 0 17 24">
                        <path d="M1.500 7H15.500V23L8.500 17.500 1.500 23Z" fill="none" stroke="#5fd0a2" strokeWidth="1.700" />
                      </svg>
                    ) : (
                      <Dot />
                    )}
                  </IntentMark>
                  <IntentName>{name}</IntentName>
                </IntentRow>
              ))}
            </IntentList>
          </MainBody>
        </Main>

        <Console>
          <ConsoleHeader>
            Try it now...
            <Mic width="22" height="28" viewBox="0 0 22 28">
              <rect x="7" y="0" width="7.500" height="15" rx="3.700" fill={muted} />
              <path d="M2.500 10V12Q2.500 19.500 10.800 19.500T19 12V10" fill="none" stroke={muted} strokeWidth="3.600" strokeLinecap="round" />
              <path d="M10.800 20V25M6 25.200H15.600" stroke={muted} strokeWidth="3.600" strokeLinecap="round" />
            </Mic>
          </ConsoleHeader>
          <Hint>
            <HintIcon width="22" height="22" viewBox="0 0 22 22">
              <circle cx="11" cy="11" r="9.300" fill="none" stroke={ink} strokeWidth="2.200" />
              <path d="M11 5.500V8M11 9.700V16.500" stroke={ink} strokeWidth="2.800" />
            </HintIcon>
            Please use test console above to try a sentence.
          </Hint>
          <Messenger>
            <svg width="90" height="90" viewBox="0 0 90 90">
              <path d="M28 22H62Q66 22 66 26V70Q57 66 52 65H28Q24 65 24 61V26Q24 22 28 22Z" fill="#fff" />
              <path d="M31 53.500Q45 63 59 53.500" fill="none" stroke="#2592ec" strokeWidth="2.600" strokeLinecap="round" />
            </svg>
          </Messenger>
        </Console>
      </Page>

      <Taskbar>
        <Task $w={72}>
          <TaskArt>
            <svg width="24" height="24" viewBox="0 0 24 24" fill="#fff">
              <path d="M0 3.300 10 2V11.500H0ZM11 1.800 24 0V11.500H11ZM0 12.500H10V22L0 20.700ZM11 12.500H24V24L11 22.200Z" />
            </svg>
          </TaskArt>
        </Task>
        <Task $w={72}>
          <TaskArt>
            <svg width="24" height="24" viewBox="0 0 24 24"><circle cx="12" cy="12" r="9.800" fill="none" stroke="#fff" strokeWidth="3" /></svg>
          </TaskArt>
        </Task>
        <Task $w={76}>
          <TaskArt>
            <svg width="34" height="20" viewBox="0 0 34 20" fill="none" stroke="#fff">
              <path d="M6.500.5H23.500V19.500H6.500ZM4 3.500H.5V16.500H4M26 3.500H29.500V16.500H26" />
            </svg>
          </TaskArt>
        </Task>
        {tasks.map((t, i) =>
          t.active ? (
            <Task key={i} $w={73} $active>
              <TaskArt>{t.art}</TaskArt>
              <TaskLine $w={73} />
            </Task>
          ) : (
            <Task key={i} $w={i === 3 ? 77 : 75}>
              <TaskArt $nudge={t.nudge}>{t.art}</TaskArt>
              {t.line && <TaskLine $w={61} $stacked={t.stacked} />}
            </Task>
          ),
        )}
        <Tray>
          <TraySlot $w={46}>
            <svg width="19" height="12" viewBox="0 0 19 12" fill="none" stroke="#fff" strokeWidth="1.500"><path d="M.5 10.500 9.500 1.500 18.500 10.500" /></svg>
          </TraySlot>
          <TraySlot $w={48}>
            <svg width="25" height="24" viewBox="0 0 25 24">
              <path d="M.5 6.500H21.500V18.500H.5Z" fill="none" stroke="#fff" />
              <path d="M3 9V16" stroke="#fff" strokeWidth="2" />
              <rect x="22" y="10" width="2" height="5" fill="#fff" />
              <path d="M16.500 11 23 24H10Z" fill="#fdb913" />
              <path d="M16.500 15V20M16.500 21.200V22.800" stroke="#222" strokeWidth="1.500" />
            </svg>
          </TraySlot>
          <TraySlot $w={51}>
            <svg width="21" height="20" viewBox="0 0 21 20" fill="none" stroke="#fff" strokeWidth="1.200">
              <path d="M.6 7H4L9 1.500V18.500L4 13H.6ZM13 6.500 20 13.500M20 6.500 13 13.500" />
            </svg>
          </TraySlot>
          <TraySlot $w={45}>
            <svg width="19" height="20" viewBox="0 0 19 20" fill="none" stroke="#ddd" strokeWidth="1.300">
              <path d="M.8 19Q1 3 18 1.500M5.500 19Q6 8 18 6.500M10 19Q10.500 12.500 18 11.500M14 19Q14 17 18 15.500" />
              <circle cx="17" cy="18" r="1.500" fill="#fff" stroke="none" />
            </svg>
          </TraySlot>
          <TraySlot $w={48}>
            <svg width="22" height="22" viewBox="0 0 22 22">
              <circle cx="11" cy="11" r="11" fill="#f3bd6b" />
              <circle cx="16" cy="10.500" r="3" fill="#ef8b2c" />
              <path d="M0 11Q7 5 13 10.500 18 15 21.500 13.500 19 22 11 22T0 11Z" fill="#7387b8" />
            </svg>
          </TraySlot>
          <TraySlot $w={49}>
            <svg width="33" height="19" viewBox="0 0 33 19" fill="none" stroke="#fff">
              <rect x=".5" y=".5" width="32" height="18" />
              <path d="M4 4.500H29M4 9.500H29" strokeDasharray="2 1.500" />
              <path d="M4 14.500H8M10 14.500H23M25 14.500H29" />
            </svg>
          </TraySlot>
          <Clock>
            5:13 PM
            <br />
            4/13/2017
          </Clock>
          <TraySlot $w={74}>
            <svg width="58" height="40" viewBox="0 0 58 40">
              <path d="M20 1H44V20H33L31 24 27 20H20Z" fill="#fff" />
              <path d="M24.500 6.500H39.500M24.500 10.500H39.500M24.500 14.500H34" stroke="#1c1c1c" strokeWidth="1.300" />
              <circle cx="44" cy="25" r="12" fill="#2b2a2a" stroke="#8d8d8d" />
              <text x="44" y="31" textAnchor="middle" fontFamily="Open Sans, sans-serif" fontWeight="600" fontSize="16" fill="#fff">1</text>
            </svg>
          </TraySlot>
          <ShowDesktop />
        </Tray>
      </Taskbar>
    </Screen>
  );
}
